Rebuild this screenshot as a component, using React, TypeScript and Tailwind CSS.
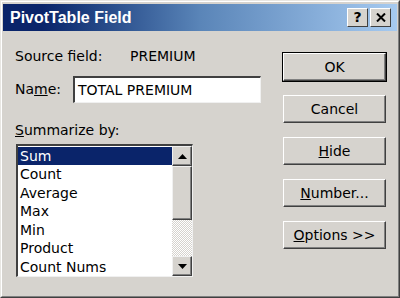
import React from 'react';

const items = ['Sum', 'Count', 'Average', 'Max', 'Min', 'Product', 'Count Nums'];

function Btn({ children, isDefault }: { children: React.ReactNode; isDefault?: boolean }) {
  return (
    <div className={isDefault ? 'border border-black' : 'border border-transparent'}>
      <div className="h-[28px] flex items-center justify-center bg-[#d6d3ce] border-t border-l border-t-white border-l-white border-r border-b border-r-[#404040] border-b-[#404040] shadow-[inset_-1px_-1px_0_#808080]">
        {children}
      </div>
    </div>
  );
}

function ScrollBtn({ up }: { up?: boolean }) {
  return (
    <div className="h-[20px] flex items-center justify-center bg-[#d6d3ce] border-t border-l border-t-[#f0f0f0] border-l-[#f0f0f0] border-r border-b border-r-[#404040] border-b-[#404040] shadow-[inset_-1px_-1px_0_#808080]">
      <svg width="9" height="5" viewBox="0 0 9 5">
        {up ? <polygon points="4.5,0 9,5 0,5" fill="#000" /> : <polygon points="0,0 9,0 4.5,5" fill="#000" />}
      </svg>
    </div>
  );
}

export default function App() {
  return (
    <div
      className="w-[400px] h-[298px] bg-[#d6d3ce] border border-t-[#e8e6e2] border-l-[#e8e6e2] border-r-[#404040] border-b-[#404040] flex flex-col text-black text-[14px]"
      style={{ fontFamily: 'Tahoma, "DejaVu Sans", sans-serif' }}
    >
      <div className="border-t border-l border-t-white border-l-white border-r border-b border-r-[#808080] border-b-[#808080] p-[1px] flex flex-col flex-1">
        {/* title bar */}
        <div className="h-[27px] mt-[1px] flex items-center justify-between pl-[7px] pr-[6px] bg-gradient-to-r from-[#0a246a] from-10% via-[#5a85b8] to-[#a6caf0]">
          <span className="text-white font-bold text-[16px]" style={{ fontFamily: '"Liberation Sans", Arial, sans-serif' }}>
            PivotTable Field
          </span>
          <div className="flex gap-[2px]">
            <div className="w-[21px] h-[19px] flex items-center justify-center bg-[#d6d3ce] border-t border-l border-t-white border-l-white border-r border-b border-r-[#404040] border-b-[#404040] font-bold text-[14px]">?</div>
            <div className="w-[21px] h-[19px] flex items-center justify-center bg-[#d6d3ce] border-t border-l border-t-white border-l-white border-r border-b border-r-[#404040] border-b-[#404040]">
              <svg width="10" height="9" viewBox="0 0 10 9">
                <path d="M1 0.5 L9 8.5 M9 0.5 L1 8.5" stroke="#000" strokeWidth="2" />
              </svg>
            </div>
          </div>
        </div>

        <div className="flex flex-1 pl-[12px] pr-[10px]">
          {/* left column */}
          <div className="flex flex-col w-[250px]">
            <div className="flex mt-[16px] h-[18px] items-center">
              <span className="w-[115px]">Source field:</span>
              <span>PREMIUM</span>
            </div>
            <div className="flex items-center mt-[11px]">
              <span className="w-[58px]">
                Na<u>m</u>e:
              </span>
              <div className="w-[188px] h-[27px] bg-white border-t-2 border-l-2 border-t-[#404040] border-l-[#404040] border-r border-b border-r-[#f0f0f0] border-b-[#f0f0f0] flex items-center pl-[3px]">
                TOTAL PREMIUM
              </div>
            </div>
            <div className="mt-[18px] h-[18px] leading-[18px]">
              <u>S</u>ummarize by:
            </div>
            <div className="mt-[5px] ml-[1px] w-[177px] h-[133px] bg-white border-t-2 border-l-2 border-t-[#404040] border-l-[#404040] border-r border-b border-r-[#f0f0f0] border-b-[#f0f0f0] flex">
              <div className="flex-1 flex flex-col pt-[1px]">
                {items.map((it, i) => (
                  <div
                    key={it}
                    className={
                      'h-[18.6px] leading-[18px] pl-[2px] ' +
                      (i === 0 ? 'bg-[#0a246a] text-white' : '')
                    }
                  >
                    {it}
                  </div>
                ))}
              </div>
              <div className="w-[20px] flex flex-col bg-[repeating-conic-gradient(#d6d3ce_0%_25%,#ffffff_0%_50%)] bg-[length:2px_2px]">
                <ScrollBtn up />
                <div className="h-[54px] bg-[#d6d3ce] border-t border-l border-t-[#f0f0f0] border-l-[#f0f0f0] border-r border-b border-r-[#404040] border-b-[#404040] shadow-[inset_-1px_-1px_0_#808080]" />
                <div className="flex-1" />
                <ScrollBtn />
              </div>
            </div>
          </div>

          {/* buttons */}
          <div className="ml-auto mt-[21px] w-[105px] flex flex-col gap-[12px]">
            <Btn isDefault>OK</Btn>
            <Btn>Cancel</Btn>
            <Btn>
              <span>
                <u>H</u>ide
              </span>
            </Btn>
            <Btn>
              <span>
                <u>N</u>umber...
              </span>
            </Btn>
            <Btn>
              <span>
                <u>O</u>ptions &gt;&gt;
              </span>
            </Btn>
          </div>
        </div>
      </div>
    </div>
  );
}
